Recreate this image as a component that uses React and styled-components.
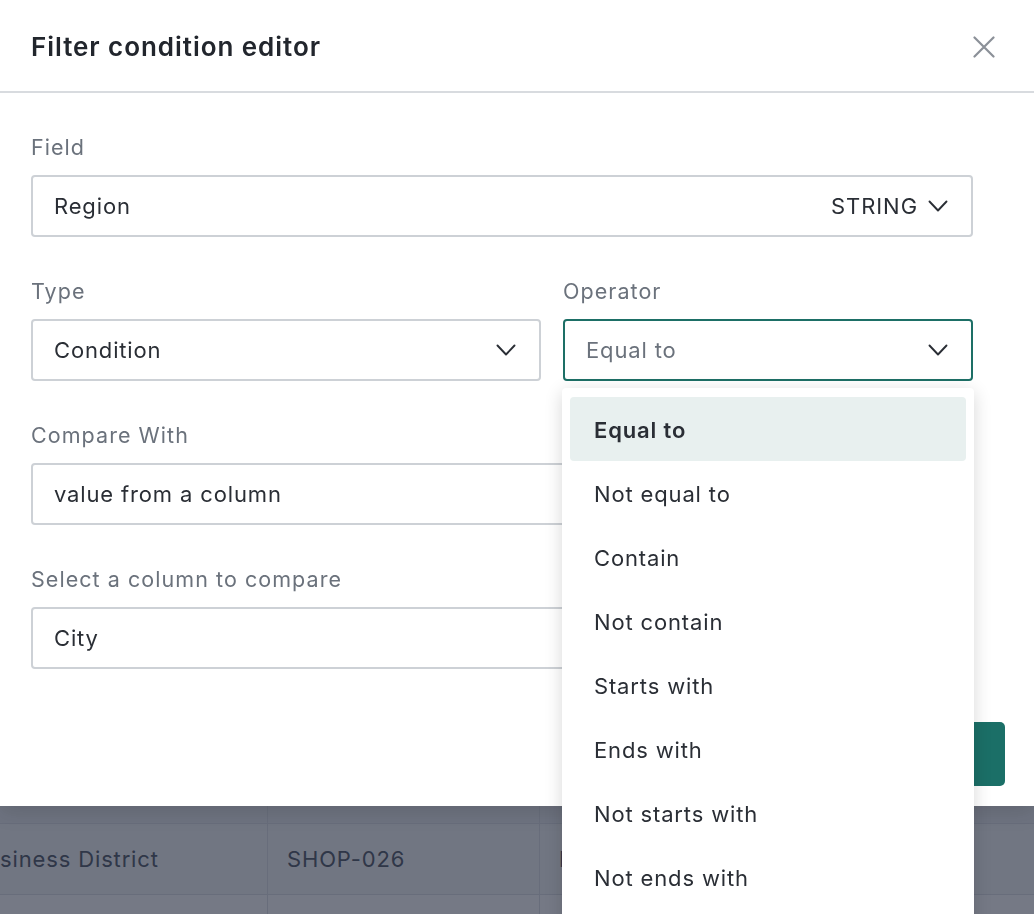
import React from "react";
import styled, { createGlobalStyle } from "styled-components";

const GlobalStyle = createGlobalStyle`
  * { box-sizing: border-box; }
  html, body { margin: 0; padding: 0; }
  body {
    font-family: Inter, "Noto Sans", "Liberation Sans", sans-serif;
    color: #2a2e35;
    background: #ffffff;
    overflow: hidden;
  }
`;

/* ---------- page behind the dialog ---------- */

const Page = styled.div`
  width: 1034px;
  height: 914px;
  overflow: hidden;
  padding-top: 770px;
`;

const Table = styled.div`
  margin-left: -48px;
  display: grid;
  grid-template-columns: 316px 272px 300px 300px;
`;

const HeadCell = styled.div`
  height: 54px;
  background: #eef0f3;
  border-right: 1px solid #dfe2e6;
  border-bottom: 1px solid #dfe2e6;
`;

const Cell = styled.div`
  height: 71px;
  display: flex;
  align-items: center;
  padding: 0 19px;
  font-size: 22px;
  letter-spacing: 0.85px;
  color: #5a626e;
  background: ${(p) => (p.$tint ? "#f6f7f8" : "#ffffff")};
  border-right: 1px solid #dfe2e6;
  border-bottom: 1px solid #dfe2e6;
  white-space: nowrap;
  overflow: hidden;
`;

const Overlay = styled.div`
  position: fixed;
  inset: 0;
  background: rgba(17, 24, 45, 0.58);
`;

/* ---------- dialog ---------- */

const Modal = styled.div`
  position: fixed;
  top: 0;
  left: 0;
  width: 1034px;
  height: 806px;
  background: #ffffff;
  display: flex;
  flex-direction: column;
  box-shadow: 0 6px 20px rgba(0, 0, 0, 0.12);
`;

const Header = styled.div`
  height: 93px;
  flex: none;
  display: flex;
  align-items: center;
  justify-content: space-between;
  padding: 2px 38px 0 31px;
  border-bottom: 2px solid #d8dbdf;
`;

const Title = styled.h2`
  margin: 0;
  font-size: 26px;
  font-weight: 600;
  color: #22262d;
  letter-spacing: 0.95px;
`;

const CloseButton = styled.button`
  border: 0;
  background: none;
  padding: 0;
  width: 24px;
  height: 24px;
  display: flex;
  align-items: center;
  justify-content: center;
  cursor: pointer;
  color: #8b9098;
`;

const Body = styled.div`
  flex: 1;
  display: flex;
  flex-direction: column;
  gap: 40px;
  padding: 40px 61px 0 31px;
`;

const Row = styled.div`
  display: grid;
  grid-template-columns: 1fr 410px;
  gap: 22px;
`;

const Group = styled.div`
  position: relative;
  display: flex;
  flex-direction: column;
  gap: 14px;
`;

const Label = styled.label`
  font-size: 21.5px;
  line-height: 28px;
  letter-spacing: 1.05px;
  color: #6b727c;
`;

const Control = styled.div`
  height: 62px;
  display: flex;
  align-items: center;
  justify-content: space-between;
  padding: 0 23px 0 21px;
  border: 2px solid ${(p) => (p.$active ? "#1d6f66" : "#cdd1d6")};
  border-radius: 4px;
  background: #ffffff;
  font-size: 22px;
  letter-spacing: 0.85px;
  color: ${(p) => (p.$placeholder ? "#6b727c" : "#2a2e35")};
`;

const Side = styled.span`
  display: flex;
  align-items: center;
  gap: 10px;
  color: #2a2e35;
  letter-spacing: 0.95px;
`;

const Footer = styled.div`
  display: flex;
  justify-content: flex-end;
  padding: 53px 29px 20px 31px;
`;

const PrimaryButton = styled.button`
  height: 64px;
  padding: 0 36px;
  border: 0;
  border-radius: 5px;
  background: #1b6f67;
  color: #ffffff;
  font-family: inherit;
  font-size: 22px;
  font-weight: 500;
`;

/* ---------- operator menu ---------- */

const Menu = styled.ul`
  position: absolute;
  top: calc(100% + 7px);
  left: -1px;
  right: -1px;
  margin: 0;
  padding: 9px 8px;
  list-style: none;
  background: #ffffff;
  border-radius: 4px;
  box-shadow: 0 4px 18px rgba(0, 0, 0, 0.16);
  z-index: 2;
`;

const Option = styled.li`
  height: 64px;
  display: flex;
  align-items: center;
  padding: 2px 24px 0;
  border-radius: 4px;
  font-size: 22px;
  letter-spacing: 0.85px;
  color: #2a2e35;
  font-weight: ${(p) => (p.$selected ? 600 : 400)};
  background: ${(p) => (p.$selected ? "#e8f0ef" : "transparent")};
`;

const Chevron = () => (
  <svg width="20" height="12" viewBox="0 0 20 12" fill="none">
    <path d="M1.5 1.5 L10 10.5 L18.5 1.5" stroke="#2a2e35" strokeWidth="1.9" strokeLinecap="round" strokeLinejoin="round" />
  </svg>
);

const CloseIcon = () => (
  <svg width="22" height="22" viewBox="0 0 22 22" fill="none">
    <path d="M1.5 1.5 L20.5 20.5 M20.5 1.5 L1.5 20.5" stroke="currentColor" strokeWidth="2.2" strokeLinecap="round" />
  </svg>
);

const operators = [
  "Equal to",
  "Not equal to",
  "Contain",
  "Not contain",
  "Starts with",
  "Ends with",
  "Not starts with",
  "Not ends with",
  "Is empty",
  "Is not empty",
];

export default function App() {
  return (
    <>
      <GlobalStyle />
      <Page>
        <Table>
          <HeadCell />
          <HeadCell />
          <HeadCell />
          <HeadCell />
          <Cell $tint>Business District</Cell>
          <Cell $tint>SHOP-026</Cell>
          <Cell $tint>North Point</Cell>
          <Cell $tint>Active</Cell>
          <Cell>Harbour Front</Cell>
          <Cell>SHOP-027</Cell>
          <Cell>East Gate</Cell>
          <Cell>Active</Cell>
        </Table>
      </Page>
      <Overlay />
      <Modal>
        <Header>
          <Title>Filter condition editor</Title>
          <CloseButton aria-label="Close">
            <CloseIcon />
          </CloseButton>
        </Header>
        <Body>
          <Group>
            <Label>Field</Label>
            <Control>
              <span>Region</span>
              <Side>
                STRING
                <Chevron />
              </Side>
            </Control>
          </Group>
          <Row>
            <Group>
              <Label>Type</Label>
              <Control>
                <span>Condition</span>
                <Chevron />
              </Control>
            </Group>
            <Group>
              <Label>Operator</Label>
              <Control $active $placeholder>
                <span>Equal to</span>
                <Chevron />
              </Control>
              <Menu>
                {operators.map((op, i) => (
                  <Option key={op} $selected={i === 0}>
                    {op}
                  </Option>
                ))}
              </Menu>
            </Group>
          </Row>
          <Group>
            <Label>Compare With</Label>
            <Control>
              <span>value from a column</span>
            </Control>
          </Group>
          <Group>
            <Label>Select a column to compare</Label>
            <Control>
              <span>City</span>
            </Control>
          </Group>
        </Body>
        <Footer>
          <PrimaryButton>Apply</PrimaryButton>
        </Footer>
      </Modal>
    </>
  );
}
